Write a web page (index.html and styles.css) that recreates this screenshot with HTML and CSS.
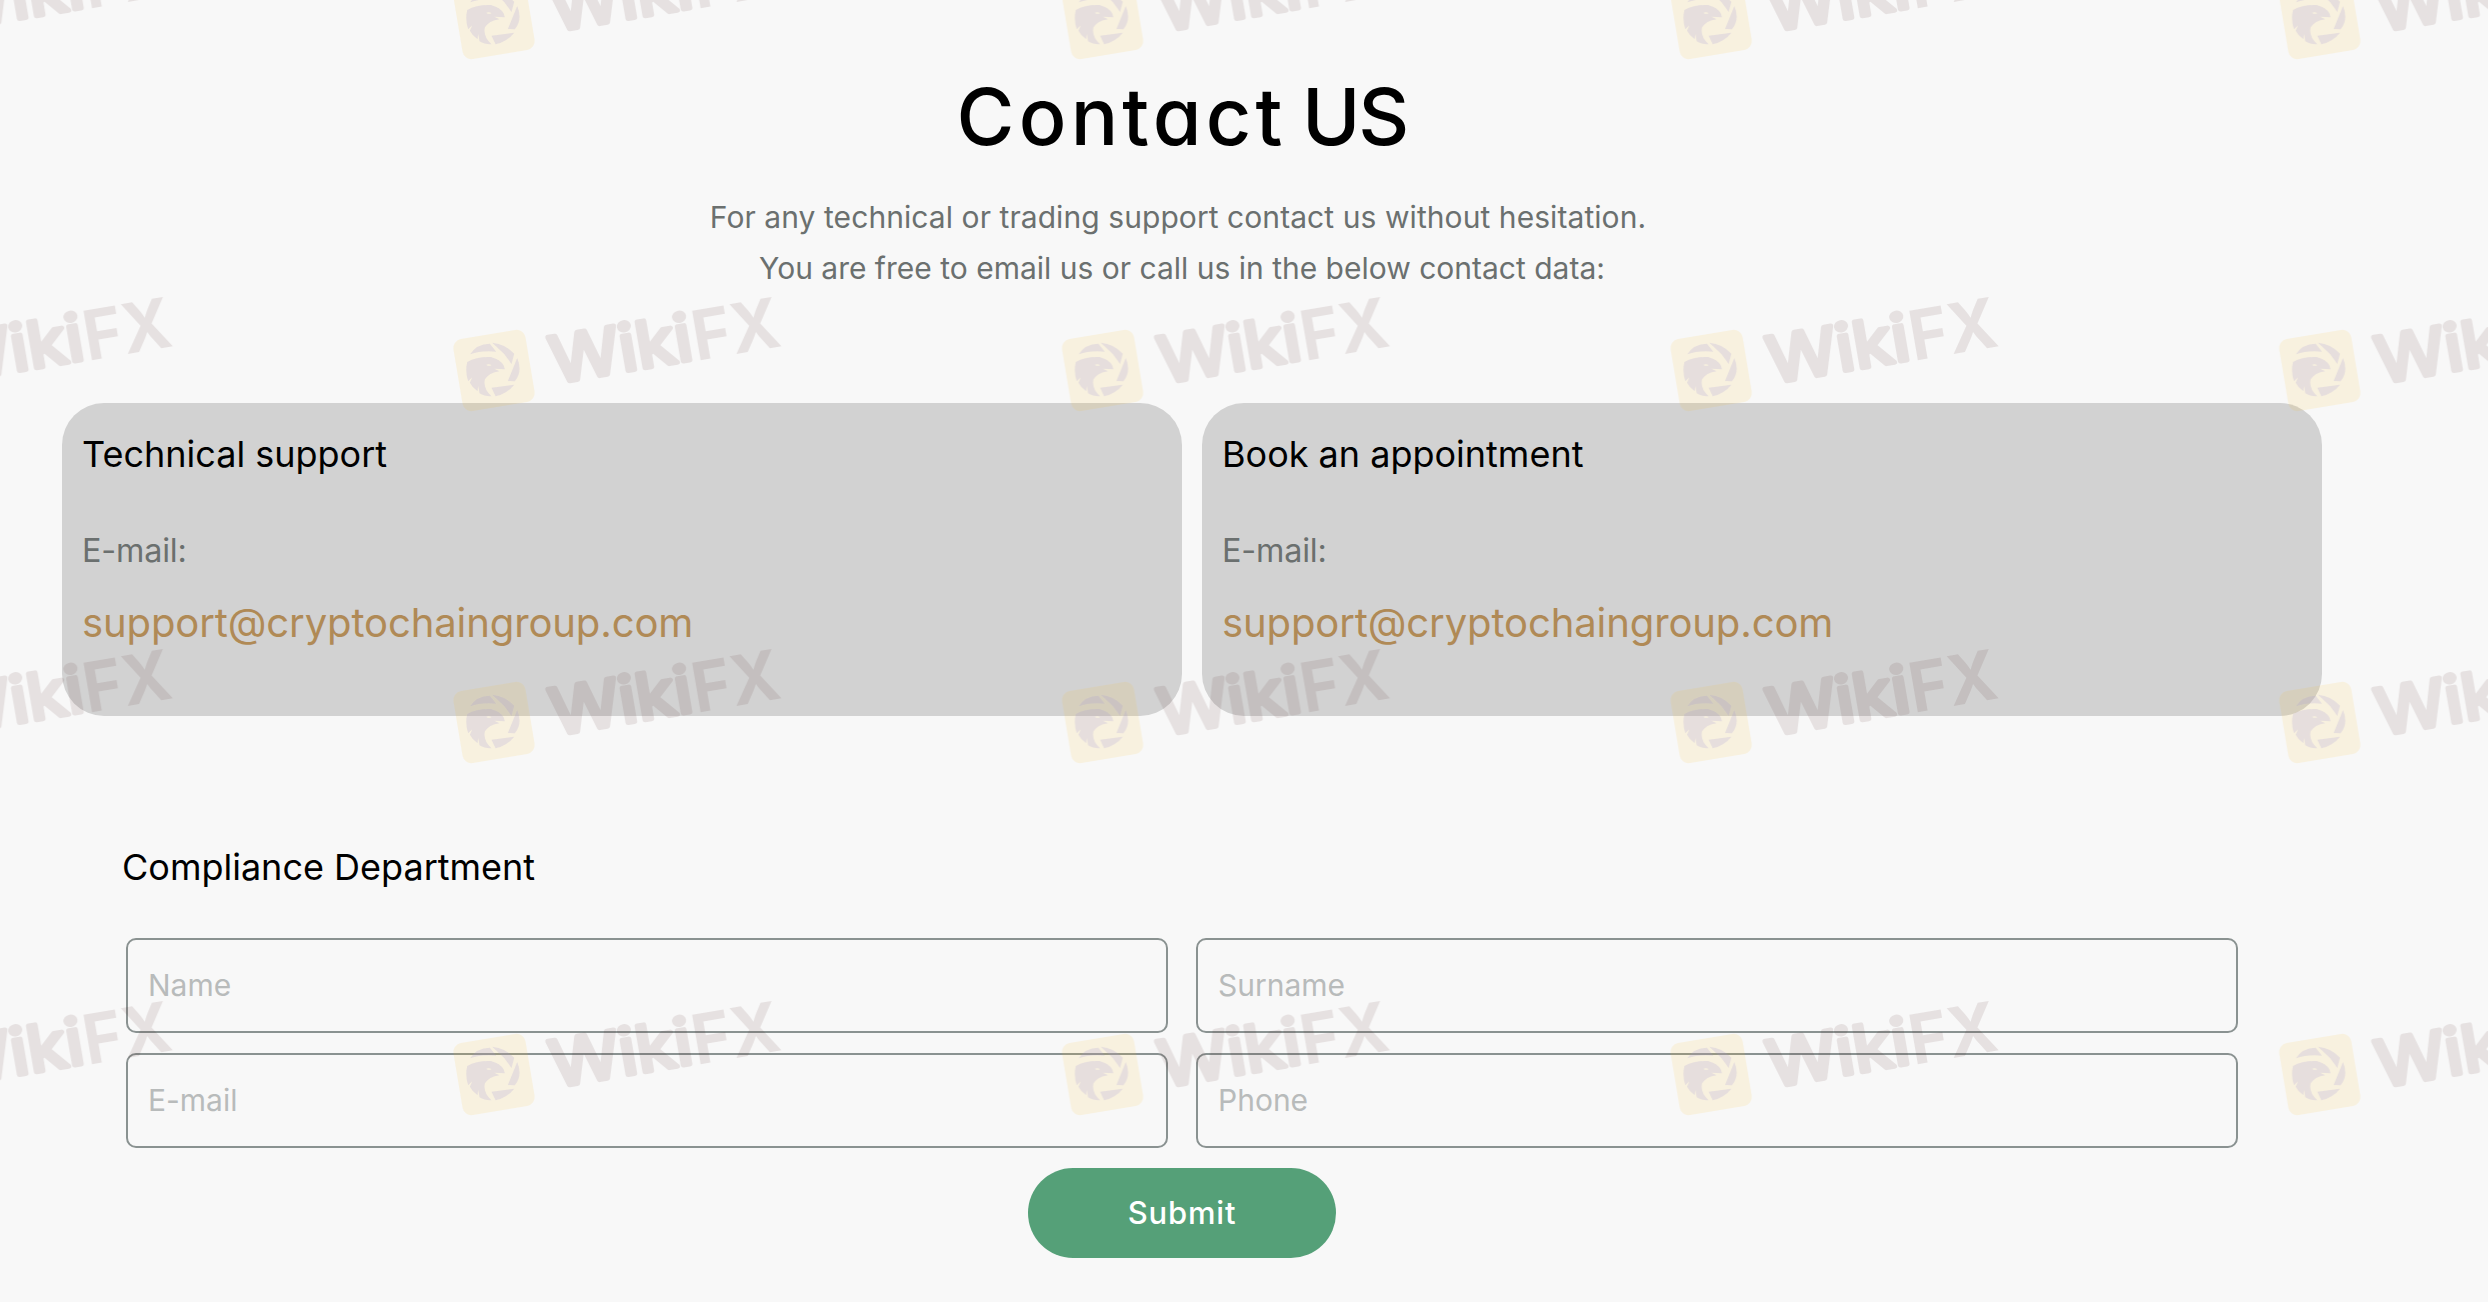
FILE: index.html
```html
<!DOCTYPE html>
<html lang="en">
<head>
    <meta charset="UTF-8">
    <meta name="viewport" content="width=device-width, initial-scale=1.0">
    <title>Contact US</title>
    <link rel="stylesheet" href="styles.css">
</head>
<body>
    <main class="contact">
        <h1>Contact <span class="us">US</span></h1>
        <p class="intro"><span class="lead">For any technical or trading support contact us without hesitation.</span><br>You are free to email us or call us in the below contact data:</p>

        <div class="cards">
            <div class="card">
                <h2>Technical support</h2>
                <p>E-mail:</p>
                <a href="mailto:support@cryptochaingroup.com">support@cryptochaingroup.com</a>
            </div>
            <div class="card">
                <h2>Book an appointment</h2>
                <p>E-mail:</p>
                <a href="mailto:support@cryptochaingroup.com">support@cryptochaingroup.com</a>
            </div>
        </div>

        <form class="contact-form">
            <h2>Compliance Department</h2>
            <div class="fields">
                <input type="text" name="name" placeholder="Name">
                <input type="text" name="surname" placeholder="Surname">
                <input type="email" name="email" placeholder="E-mail">
                <input type="tel" name="phone" placeholder="Phone">
            </div>
            <button type="submit">Submit</button>
        </form>
    </main>

    <svg class="watermark" aria-hidden="true">
        <defs>
            <pattern id="mark" width="608.6" height="352" patternUnits="userSpaceOnUse" x="440" y="270">
                <rect class="tile" x="-36.5" y="-36.5" width="73" height="73" rx="9" transform="translate(54 100.5) rotate(-9.5)"/>
                <!-- eagle head inside an aperture ring -->
                <g class="eagle" transform="translate(4.2 52) scale(.3333)">
                    <path d="M78 97Q96 66 137 65L156 89Q110 85 78 97Z"/>
                    <path d="M144 62Q184 66 210 95L202 126L180 96Z"/>
                    <path d="M219 108Q236 148 212 178L191 177Z"/>
                    <path d="M142 197L210 188Q190 214 154 223Z"/>
                    <path d="M69 120Q98 103 140 105Q168 112 178 130L182 142L150 140L166 148Q134 153 122 172Q116 200 142 223Q121 224 106 214L102 192L100 208Q84 196 77 182L84 166L72 178Q62 150 69 120ZM126 128Q132 134 142 130Q136 125 126 128Z" fill-rule="evenodd"/>
                </g>
                <g transform="translate(113.5 115.6) rotate(-9.8)">
                    <text class="word round" x="1" y="-2" textLength="143" lengthAdjust="spacingAndGlyphs">Wiki</text>
                    <text class="word" x="145" textLength="88" lengthAdjust="spacingAndGlyphs">FX</text>
                </g>
            </pattern>
        </defs>
        <rect width="100%" height="100%" fill="url(#mark)"/>
    </svg>
</body>
</html>
```
FILE: styles.css
```css
* { box-sizing: border-box; margin: 0; padding: 0; }
body { font-family: Inter, sans-serif; background-color: #f8f8f8; color: #000; height: 1302px; overflow: hidden; }
h1, h2 { font-weight: 400; }
.contact { padding: 68px 166px 0 62px; }
h1 { margin-right: 20px; text-align: center; font-size: 79px; line-height: 96px; font-weight: 500; letter-spacing: 4.2px; word-spacing: -10px; font-feature-settings: "cv11"; }
.us { letter-spacing: -2px; }
.intro { margin: 28px 20px 0 0; text-align: center; font-size: 30px; line-height: 51px; color: #6b706f; }
.lead { margin-right: 8px; letter-spacing: .07px; }
.cards { display: grid; grid-template-columns: 1fr 1fr; gap: 20px; margin-top: 109px; }
.card { height: 313px; padding: 29px 20px; border-radius: 42px; background-color: #d2d2d2; }
h2 { font-size: 36px; line-height: 44px; }
.card p { margin-top: 55px; font-size: 32.4px; line-height: 40px; letter-spacing: -.2px; color: #6b706f; }
.card a { display: block; width: max-content; margin-top: 27px; font-size: 40px; line-height: 50px; letter-spacing: -.1px; color: #b08a56; text-decoration: none; }
.contact-form { margin-top: 129px; padding: 0 84px 0 60px; }
.fields { display: grid; grid-template-columns: 1fr 1fr; gap: 20px 28px; margin: 49px 0 0 4px; }
.fields input { width: 100%; height: 95px; padding: 0 20px 2px; border: 2px solid #8a9291; border-radius: 10px; background: none; font: 30px Inter, sans-serif; }
.fields input::placeholder { color: #b8bbbb; opacity: 1; }
button { display: block; width: 308px; height: 90px; margin: 20px 464px 0 auto; padding-bottom: 2px; margin-left: 906px; border: none; border-radius: 45px; background-color: #55a078; color: #fff; font: 500 31px Inter, sans-serif; letter-spacing: .8px; cursor: pointer; }
.watermark { position: absolute; top: 0; left: 0; width: 100%; height: 1302px; pointer-events: none; }
.tile { fill: #f8be28; opacity: .12; }
.eagle { fill: #9e92d5; opacity: .2; }
.word { font: 700 69px Inter, sans-serif; fill: #421010; opacity: .1; }
.round { font-size: 64px; font-weight: 400; stroke: #421010; stroke-width: 5; stroke-linejoin: round; }
```
